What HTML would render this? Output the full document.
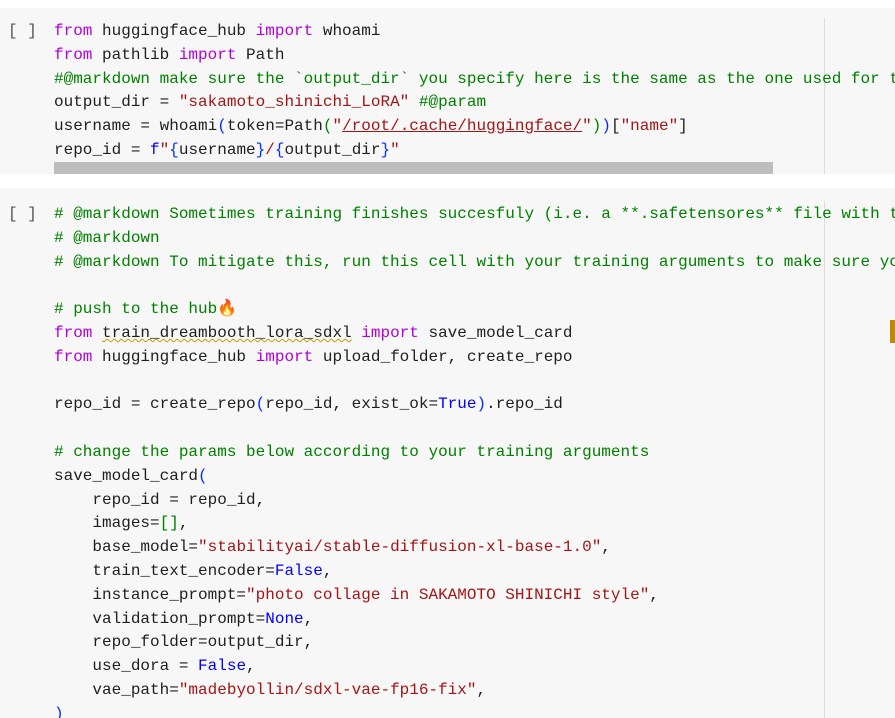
<!DOCTYPE html>
<html><head><style>
html,body{margin:0;width:895px;height:718px;overflow:hidden;}
body{background:#fff;position:relative;font-family:"Liberation Mono",monospace;}
.wrap{position:absolute;left:0;top:0;width:895px;height:718px;overflow:hidden;}
.cell{position:absolute;left:0;width:895px;background:#f7f7f7;}
pre{margin:0;position:absolute;left:54px;width:841px;overflow:hidden;font:16px/23.8px "Liberation Mono",monospace;color:#1f1f1f;white-space:pre;}
.br{position:absolute;left:8px;font:16px "Liberation Mono",monospace;color:#555;}
.k{color:#af00db}.c{color:#008000}.s{color:#a31515}.b{color:#0000ff}.p{color:#0431fa}
.u{text-decoration:underline;text-decoration-color:#a31515}
.w{text-decoration:underline wavy #c89a00;text-decoration-thickness:1px}
.vl{position:absolute;left:824px;width:1px;background:#ddd;}
</style></head><body><div class="wrap">
<div class="cell" style="top:8px;height:166px"></div>
<div class="cell" style="top:188px;height:530px"></div>
<div class="vl" style="top:18px;height:156px"></div>
<div class="vl" style="top:201px;height:517px"></div>
<div style="position:absolute;left:54px;top:162px;width:719px;height:12px;background:#bdbdbd"></div>
<div style="position:absolute;left:890px;top:320px;width:5px;height:23px;background:#c08a00"></div>
<div class="br" style="top:22px">[ ]</div>
<div class="br" style="top:205px">[ ]</div>
<pre style="top:20px"><span class="k">from</span> huggingface_hub <span class="k">import</span> whoami
<span class="k">from</span> pathlib <span class="k">import</span> Path
<span class="c">#@markdown make sure the `output_dir` you specify here is the same as the one used for training</span>
output_dir = <span class="s">"sakamoto_shinichi_LoRA"</span> <span class="c">#@param</span>
username = whoami<span class="p">(</span>token=Path<span class="c">(</span><span class="s">"<span class="u">/root/.cache/huggingface/</span>"</span><span class="c">)</span><span class="p">)</span>[<span class="s">"name"</span>]
repo_id = <span class="b">f</span><span class="s">"</span><span class="p">{</span>username<span class="p">}</span><span class="s">/</span><span class="p">{</span>output_dir<span class="p">}</span><span class="s">"</span></pre>
<pre style="top:203px"><span class="c"># @markdown Sometimes training finishes succesfuly (i.e. a **.safetensores** file with the</span>
<span class="c"># @markdown</span>
<span class="c"># @markdown To mitigate this, run this cell with your training arguments to make sure your</span>

<span class="c"># push to the hub</span>🔥
<span class="k">from</span> <span class="w">train_dreambooth_lora_sdxl</span> <span class="k">import</span> save_model_card
<span class="k">from</span> huggingface_hub <span class="k">import</span> upload_folder, create_repo

repo_id = create_repo<span class="p">(</span>repo_id, exist_ok=<span class="b">True</span><span class="p">)</span>.repo_id

<span class="c"># change the params below according to your training arguments</span>
save_model_card<span class="p">(</span>
    repo_id = repo_id,
    images=<span class="c">[]</span>,
    base_model=<span class="s">"stabilityai/stable-diffusion-xl-base-1.0"</span>,
    train_text_encoder=<span class="b">False</span>,
    instance_prompt=<span class="s">"photo collage in SAKAMOTO SHINICHI style"</span>,
    validation_prompt=<span class="b">None</span>,
    repo_folder=output_dir,
    use_dora = <span class="b">False</span>,
    vae_path=<span class="s">"madebyollin/sdxl-vae-fp16-fix"</span>,
<span class="p">)</span></pre>
</div></body></html>
